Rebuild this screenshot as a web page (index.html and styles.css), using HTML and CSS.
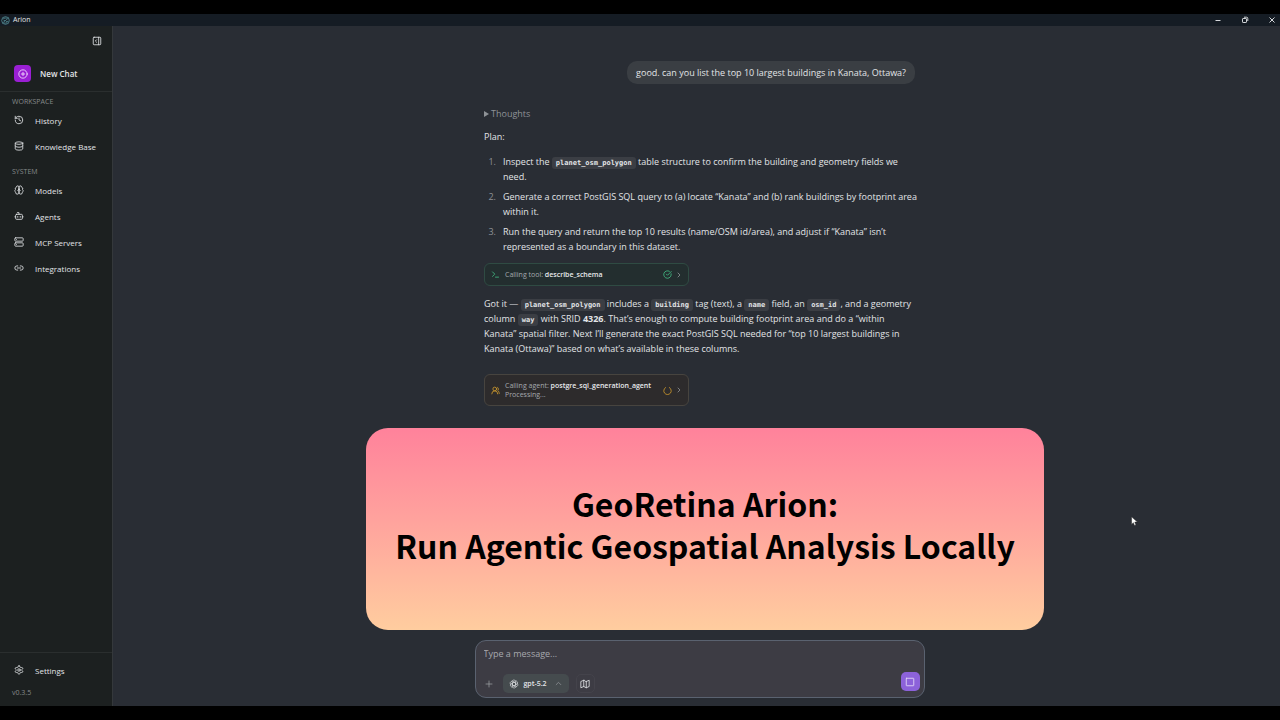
FILE: index.html
```html
<!DOCTYPE html>
<html lang="en">
<head>
<meta charset="utf-8">
<meta name="viewport" content="width=device-width, initial-scale=1">
<title>Arion</title>
<link rel="stylesheet" href="styles.css">
</head>
<body>
<div class="window">
  <header class="titlebar">
    <svg class="app-logo" viewBox="0 0 20 20" fill="none" stroke="#5fa3ad" stroke-width="1.5"><circle cx="10" cy="10" r="8.5"/><path d="M3.500 15.500 8 12l4-4 4.500-3.500M4 7.500C7 4 11 4 13 5M7 15.500c4 1 8-1 9-5M6 10h3M11 12h3"/></svg>
    <span class="app-name">Arion</span>
    <div class="window-controls">
      <button class="win-btn" aria-label="Minimize"><svg viewBox="0 0 8 8"><path d="M1.500 4.500h5"/></svg></button>
      <button class="win-btn" aria-label="Restore"><svg viewBox="0 0 8 8"><rect x="1.500" y="2.500" width="4" height="4" rx=".6"/><path d="M3 1.200h2.500a1.300 1.300 0 0 1 1.300 1.300V5"/></svg></button>
      <button class="win-btn" aria-label="Close"><svg viewBox="0 0 8 8"><path d="m1.500 1.500 5 5m0-5-5 5"/></svg></button>
    </div>
  </header>

  <div class="app">
    <aside class="sidebar">
      <div class="sidebar-top">
        <button class="collapse" aria-label="Collapse sidebar"><svg class="icon" viewBox="0 0 24 24"><rect x="3" y="3" width="18" height="18" rx="2"/><path d="M16 3v18M11 9l-3 3 3 3"/></svg></button>
        <button class="new-chat"><span class="new-chat-badge"><svg class="icon" viewBox="0 0 24 24"><circle cx="12" cy="12" r="10"/><path d="M8 12h8M12 8v8"/></svg></span>New Chat</button>
      </div>
      <nav class="nav">
        <h2 class="nav-title">WORKSPACE</h2>
        <a class="nav-item" href="#"><svg class="icon" viewBox="0 0 24 24"><path d="M3 12a9 9 0 1 0 9-9 9.750 9.750 0 0 0-6.740 2.740L3 8"/><path d="M3 3v5h5M12 7v5l4 2"/></svg>History</a>
        <a class="nav-item" href="#"><svg class="icon" viewBox="0 0 24 24"><ellipse cx="12" cy="5" rx="9" ry="3"/><path d="M3 5v14a9 3 0 0 0 18 0V5M3 12a9 3 0 0 0 18 0"/></svg>Knowledge Base</a>
        <h2 class="nav-title">SYSTEM</h2>
        <a class="nav-item" href="#"><svg class="icon" viewBox="0 0 24 24"><path d="M12 5a3 3 0 1 0-5.997.125 4 4 0 0 0-2.526 5.770 4 4 0 0 0 .556 6.588A4 4 0 1 0 12 18ZM12 5a3 3 0 1 1 5.997.125 4 4 0 0 1 2.526 5.770 4 4 0 0 1-.556 6.588A4 4 0 1 1 12 18Z"/><path d="M15 13a4.500 4.500 0 0 1-3-4 4.500 4.500 0 0 1-3 4"/></svg>Models</a>
        <a class="nav-item" href="#"><svg class="icon" viewBox="0 0 24 24"><path d="M12 8V4H8"/><rect x="4" y="8" width="16" height="12" rx="2"/><path d="M2 14h2M20 14h2M15 13v2M9 13v2"/></svg>Agents</a>
        <a class="nav-item" href="#"><svg class="icon" viewBox="0 0 24 24"><rect x="2" y="2" width="20" height="8" rx="2"/><rect x="2" y="14" width="20" height="8" rx="2"/><path d="M6 6h.01M6 18h.01"/></svg>MCP Servers</a>
        <a class="nav-item" href="#"><svg class="icon" viewBox="0 0 24 24"><path d="M9 17H7A5 5 0 0 1 7 7h2M15 7h2a5 5 0 1 1 0 10h-2M8 12h8"/></svg>Integrations</a>
      </nav>
      <footer class="sidebar-foot">
        <a class="nav-item" href="#"><svg class="icon" viewBox="0 0 24 24"><path d="M12.220 2h-.44a2 2 0 0 0-2 2v.18a2 2 0 0 1-1 1.730l-.43.25a2 2 0 0 1-2 0l-.15-.08a2 2 0 0 0-2.730.73l-.22.38a2 2 0 0 0 .73 2.730l.15.1a2 2 0 0 1 1 1.720v.51a2 2 0 0 1-1 1.740l-.15.09a2 2 0 0 0-.73 2.730l.22.38a2 2 0 0 0 2.730.73l.15-.08a2 2 0 0 1 2 0l.43.25a2 2 0 0 1 1 1.730V20a2 2 0 0 0 2 2h.44a2 2 0 0 0 2-2v-.18a2 2 0 0 1 1-1.730l.43-.25a2 2 0 0 1 2 0l.15.08a2 2 0 0 0 2.730-.73l.22-.39a2 2 0 0 0-.73-2.730l-.15-.08a2 2 0 0 1-1-1.740v-.5a2 2 0 0 1 1-1.740l.15-.09a2 2 0 0 0 .73-2.730l-.22-.38a2 2 0 0 0-2.730-.73l-.15.08a2 2 0 0 1-2 0l-.43-.25a2 2 0 0 1-1-1.730V4a2 2 0 0 0-2-2z"/><circle cx="12" cy="12" r="3"/></svg>Settings</a>
        <p class="version">v0.3.5</p>
      </footer>
    </aside>

    <main class="main">
      <section class="thread">
        <p class="bubble">good. can you list the top 10 largest buildings in Kanata, Ottawa?</p>
        <details class="thoughts"><summary>Thoughts</summary></details>
        <p class="plan">Plan:</p>
        <ol class="steps">
          <li>Inspect the <code>planet_osm_polygon</code> table structure to confirm the building and geometry fields we need.</li>
          <li>Generate a correct PostGIS SQL query to (a) locate “Kanata” and (b) rank buildings by footprint area within it.</li>
          <li>Run the query and return the top 10 results (name/OSM id/area), and adjust if “Kanata” isn’t represented as a boundary in this dataset.</li>
        </ol>
        <button class="call call-tool">
          <svg class="icon" viewBox="0 0 24 24"><path d="m4 17 6-6-6-6M12 19h8"/></svg>
          <span class="call-text"><span>Calling tool: <strong>describe_schema</strong></span></span>
          <svg class="icon" viewBox="0 0 24 24"><path d="M21.800 10A10 10 0 1 1 17 3.335"/><path d="m9 11 3 3L22 4"/></svg>
          <svg class="icon chevron" viewBox="0 0 24 24"><path d="m9 18 6-6-6-6"/></svg>
        </button>
        <p class="answer">Got it — <code>planet_osm_polygon</code> includes a <code>building</code> tag (text), a <code>name</code> field, an <code>osm_id</code>, and a geometry column <code>way</code> with SRID <b>4326</b>. That’s enough to compute building footprint area and do a “within Kanata” spatial filter. Next I’ll generate the exact PostGIS SQL needed for “top 10 largest buildings in Kanata (Ottawa)” based on what’s available in these columns.</p>
        <button class="call call-agent">
          <svg class="icon" viewBox="0 0 24 24"><path d="M18 21a8 8 0 0 0-16 0"/><circle cx="10" cy="8" r="5"/><path d="M22 20c0-3.370-2-6.500-4-8a5 5 0 0 0-.45-8.300"/></svg>
          <span class="call-text"><span>Calling agent: <strong>postgre_sql_generation_agent</strong></span><span>Processing...</span></span>
          <svg class="icon" viewBox="0 0 24 24"><path d="M17 4a10 10 0 1 1-10 0"/></svg>
          <svg class="icon chevron" viewBox="0 0 24 24"><path d="m9 18 6-6-6-6"/></svg>
        </button>
      </section>

      <form class="composer">
        <textarea class="message" rows="1" aria-label="Message" placeholder="Type a message..."></textarea>
        <div class="tools">
          <button type="button" class="add" aria-label="Add attachment"><svg class="icon" viewBox="0 0 24 24"><path d="M3 12h18M12 3v18"/></svg></button>
          <button type="button" class="model"><svg class="icon" viewBox="0 0 24 24"><path id="petal" d="M12 7.500 7.800 10v6.500c0 3 2.200 5 4.700 5 2 0 3.500-1 4.200-2.700"/><use href="#petal" transform="rotate(60 12 12)"/><use href="#petal" transform="rotate(120 12 12)"/><use href="#petal" transform="rotate(180 12 12)"/><use href="#petal" transform="rotate(240 12 12)"/><use href="#petal" transform="rotate(300 12 12)"/></svg>gpt-5.2<svg class="icon caret" viewBox="0 0 24 24"><path d="m4 16 8-8 8 8"/></svg></button>
          <button type="button" class="map" aria-label="Map"><svg class="icon" viewBox="0 0 24 24"><path d="M9 3 2 6v15l7-3 6 3 7-3V3l-7 3ZM9 3v15M15 6v15"/></svg></button>
          <button type="button" class="stop" aria-label="Stop"><svg class="icon" viewBox="0 0 24 24"><rect x="3" y="3" width="18" height="18" rx="1"/></svg></button>
        </div>
      </form>
    </main>
  </div>
</div>

<div class="banner"><h1>GeoRetina Arion:<br>Run Agentic Geospatial Analysis Locally</h1></div>
<svg class="cursor" viewBox="0 0 12 18"><path d="M1 1v13l3-3 2 5 2.500-1-2-5H11z" fill="#fff" stroke="#222" stroke-width=".8"/></svg>
</body>
</html>
```
FILE: styles.css
```css
* { box-sizing: border-box; margin: 0; }

body {
  background: #000;
  padding: 14px 0;
  position: relative;
  font: 9px/15px "Open Sans", "Noto Sans", sans-serif;
  color: #e2e4e7;
}

button, textarea { font: inherit; color: inherit; border: 0; background: none; padding: 0; }
a { color: inherit; text-decoration: none; }

.icon {
  width: 10px;
  height: 10px;
  flex: none;
  fill: none;
  stroke: currentColor;
  stroke-width: 2;
  stroke-linecap: round;
  stroke-linejoin: round;
}

.window {
  display: flex;
  flex-direction: column;
  min-height: calc(100vh - 28px);
}

/* Title bar */
.titlebar {
  display: flex;
  align-items: center;
  gap: 3px;
  height: 12px;
  padding-left: 1px;
  background: #151c24;
  font-size: 7px;
  line-height: 12px;
}
.app-logo { width: 9px; height: 9px; }
.window-controls { display: flex; margin-left: auto; padding-right: 4px; gap: 19px; }
.win-btn { width: 8px; height: 12px; display: flex; align-items: center; justify-content: center; }
.win-btn svg { width: 8px; height: 8px; fill: none; stroke: #d5d8db; stroke-width: 1; }

.app { display: flex; flex: 1; }

/* Sidebar */
.sidebar {
  width: 113px;
  flex: none;
  display: flex;
  flex-direction: column;
  background: #1c2020;
  border-right: 1px solid #34383b;
}
.sidebar-top {
  display: flex;
  flex-direction: column;
  align-items: flex-start;
  padding: 10px 10px 9px 14px;
  border-bottom: 1px solid #2a2e2e;
}
.collapse { align-self: flex-end; display: flex; height: 10px; }
.new-chat {
  display: flex;
  align-items: center;
  gap: 9px;
  margin-top: 19px;
  font-size: 8px;
  font-weight: 600;
}
.new-chat-badge {
  display: flex;
  align-items: center;
  justify-content: center;
  width: 17px;
  height: 17px;
  border-radius: 4px;
  background: #9a1fd4;
  color: #f6e6ff;
}
.nav { flex: 1; }
.nav-title {
  padding: 2px 12px;
  font-size: 7px;
  line-height: 15px;
  font-weight: 500;
  color: #858a8a;
}
.nav-item {
  display: flex;
  align-items: center;
  gap: 11px;
  height: 26px;
  padding-left: 14px;
  font-size: 8px;
  font-weight: 500;
}
.nav-title + .nav-item { margin-top: -4px; }
.nav-item + .nav-title { margin-top: 3px; }
.sidebar-foot { border-top: 1px solid #2a2e2e; padding: 4px 0; }
.version { padding: 2px 12px; font-size: 7px; color: #858a8a; }

/* Conversation */
.main {
  flex: 1;
  min-width: 0;
  display: flex;
  flex-direction: column;
  align-items: center;
  padding: 35px 0 8px 6px;
  background: #292d34;
}
.thread {
  flex: 1;
  width: 100%;
  max-width: 431px;
  display: flex;
  flex-direction: column;
  align-items: flex-start;
}
.bubble {
  align-self: flex-end;
  padding: 4px 9px;
  border-radius: 10px;
  background: #3a3e43;
}
.thoughts { margin-top: 22px; color: #8e9297; }
.thoughts summary { display: flex; align-items: center; gap: 2px; cursor: pointer; }
.thoughts summary::before {
  content: "";
  border: solid transparent;
  border-width: 3px 0 3px 5px;
  border-left-color: currentColor;
}
.plan { margin-top: 8px; }
.steps {
  margin: 10px -5px 0 0;
  padding-left: 19px;
  display: flex;
  flex-direction: column;
  gap: 5px;
}
.steps li::marker { content: counter(list-item) ".\00a0\00a0\00a0"; color: #8e9297; }
code {
  padding: 2px 4px;
  border-radius: 3px;
  background: #3b3e44;
  font: 700 7px/9px "DejaVu Sans Mono", monospace;
}
.call {
  display: flex;
  align-items: center;
  gap: 5px;
  width: 205px;
  padding: 0 5px 0 6px;
  border: 1px solid;
  border-radius: 6px;
  text-align: left;
  font-size: 7px;
  line-height: 9px;
  color: #a6aaae;
}
.call .icon { width: 9px; height: 9px; }
.call strong { color: #e8eaec; font-weight: 600; }
.call-text { flex: 1; display: flex; flex-direction: column; padding: 6px 0; }
.call .chevron { width: 8px; height: 8px; margin-left: -2px; color: #a6aaae; }
.call-tool { margin-top: 9px; background: #232e2f; border-color: #2f4b43; }
.call-tool .icon:not(.chevron) { color: #45c98c; }
.call-agent { margin-top: 18px; background: #2d2b2c; border-color: #47443f; }
.call-agent .icon:not(.chevron) { color: #dca32e; }
.answer { margin-top: 10px; }

/* Composer */
.composer {
  width: 100%;
  max-width: 450px;
  padding: 5px 4px 4px 8px;
  border: 1px solid #5a6270;
  border-radius: 11px;
  background: #3d3c44;
}
.message { display: block; width: 100%; height: 15px; resize: none; outline: 0; overflow: hidden; }
.message::placeholder { color: #a7a9ae; opacity: 1; }
.tools { display: flex; align-items: flex-end; margin-top: 11px; height: 21px; }
.tools button { display: flex; align-items: center; justify-content: center; height: 19px; border-radius: 5px; }
.add { width: 10px; color: #a7a9ae; }
.add .icon { width: 8px; height: 8px; }
.model { gap: 4px; margin-left: 9px; width: 66px; background: #454b4e; font-size: 7px; font-weight: 600; }
.model .icon { stroke-width: 1.500; }
.model .caret { width: 7px; height: 7px; margin-left: 4px; stroke-width: 2; color: #a7a9ae; }
.map { width: 19px; margin-left: 7px; }
.tools .map { border: 1px solid #44434b; }
.tools .stop { width: 19px; margin-left: auto; align-self: flex-start; background: #8c62da; color: #e6dcfa; }

/* Title overlay and pointer */
.banner {
  position: absolute;
  left: 366px;
  top: 428px;
  width: 678px;
  height: 202px;
  display: flex;
  align-items: center;
  justify-content: center;
  padding-bottom: 11px;
  border-radius: 22px;
  background: linear-gradient(#ff829b, #ffa29d 45%, #ffcd9f);
  color: #000;
  text-align: center;
}
.banner h1 { font: 700 32px/42px "Noto Sans CJK SC", sans-serif; }
.cursor { position: absolute; left: 1131px; top: 516px; width: 7px; height: 11px; }
```
